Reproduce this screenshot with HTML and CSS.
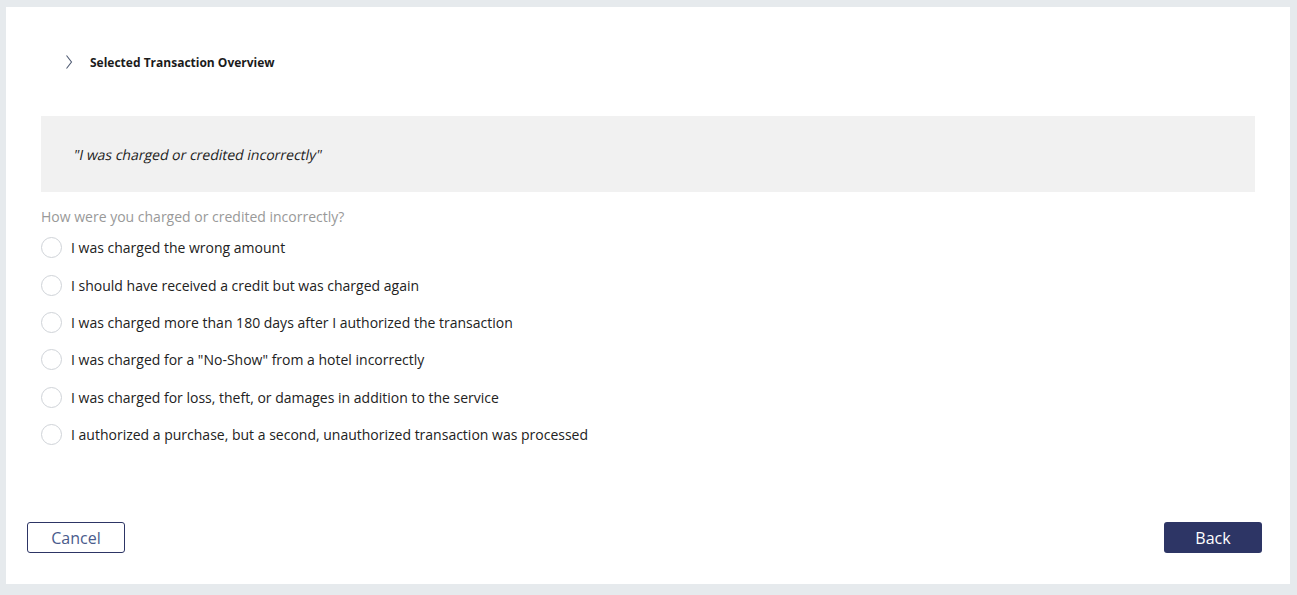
FILE: index.html
```html
<!DOCTYPE html>
<html lang="en">
<head>
    <meta charset="UTF-8">
    <meta name="viewport" content="width=device-width, initial-scale=1.0">
    <title>Dispute Transaction</title>
    <link rel="stylesheet" href="styles.css">
</head>
<body>

<div id="panel">
    <div class="overview">
        <svg class="chevron" width="8" height="16" viewBox="0 0 8 16">
            <path d="M1.5 1.5 L6.5 8 L1.5 14.5" fill="none" stroke="#4e5a72" stroke-width="1.1"/>
        </svg>
        <span>Selected Transaction Overview</span>
    </div>

    <div class="content">
        <div class="reason"><span class="slant">"I was charged or credited incorrectly"</span></div>
        <div class="question">How were you charged or credited incorrectly?</div>
        <div class="options">
            <label class="option"><span class="radio"></span>I was charged the wrong amount</label>
            <label class="option"><span class="radio"></span>I should have received a credit but was charged again</label>
            <label class="option"><span class="radio"></span>I was charged more than 180 days after I authorized the transaction</label>
            <label class="option"><span class="radio"></span>I was charged for a "No-Show" from a hotel incorrectly</label>
            <label class="option"><span class="radio"></span>I was charged for loss, theft, or damages in addition to the service</label>
            <label class="option"><span class="radio"></span>I authorized a purchase, but a second, unauthorized transaction was processed</label>
        </div>
    </div>

    <div class="footer">
        <button class="btn btn-outline">Cancel</button>
        <button class="btn btn-solid">Back</button>
    </div>
</div>

</body>
</html>
```

FILE: styles.css
```css
body {
    margin: 0;
    background-color: #e6eaed;
    font-family: "Open Sans", sans-serif;
    color: #222;
}

#panel {
    margin: 7px 0 0 6px;
    width: 1284px;
    height: 577px;
    background-color: #fff;
    display: flex;
    flex-direction: column;
    box-sizing: border-box;
    padding-top: 45px;
}

.overview {
    display: flex;
    align-items: center;
    height: 20px;
    padding-left: 59px;
    font-size: 12px;
    font-weight: bold;
    color: #1b1b1b;
}

.chevron {
    margin-right: 17px;
}

.content {
    padding: 0 35px;
}

.reason {
    margin-top: 44px;
    height: 76px;
    background-color: #f1f1f1;
    display: flex;
    align-items: center;
    padding-left: 33px;
    font-size: 14px;
    color: #222;
}

.slant {
    display: inline-block;
    transform: skewX(-12deg);
    transform-origin: center;
}

.question {
    margin-top: 15px;
    line-height: 20px;
    font-size: 14px;
    color: #999;
}

.options {
    margin-top: 2px;
}

.option {
    display: flex;
    align-items: center;
    height: 37.4px;
    font-size: 14px;
    color: #222;
}

.radio {
    width: 19px;
    height: 19px;
    border: 1px solid #cfd3d8;
    border-radius: 50%;
    margin-right: 9px;
    background-color: #fff;
}

.footer {
    margin-top: auto;
    display: flex;
    justify-content: space-between;
    padding: 0 28px 31px 21px;
}

.btn {
    width: 98px;
    height: 31px;
    border-radius: 3px;
    font-family: "Open Sans", sans-serif;
    font-size: 16px;
    cursor: pointer;
    box-sizing: border-box;
}

.btn-outline {
    background-color: #fff;
    border: 1px solid #2d3565;
    color: #4a5b8c;
}

.btn-solid {
    background-color: #2d3565;
    border: none;
    color: #fff;
}
```
